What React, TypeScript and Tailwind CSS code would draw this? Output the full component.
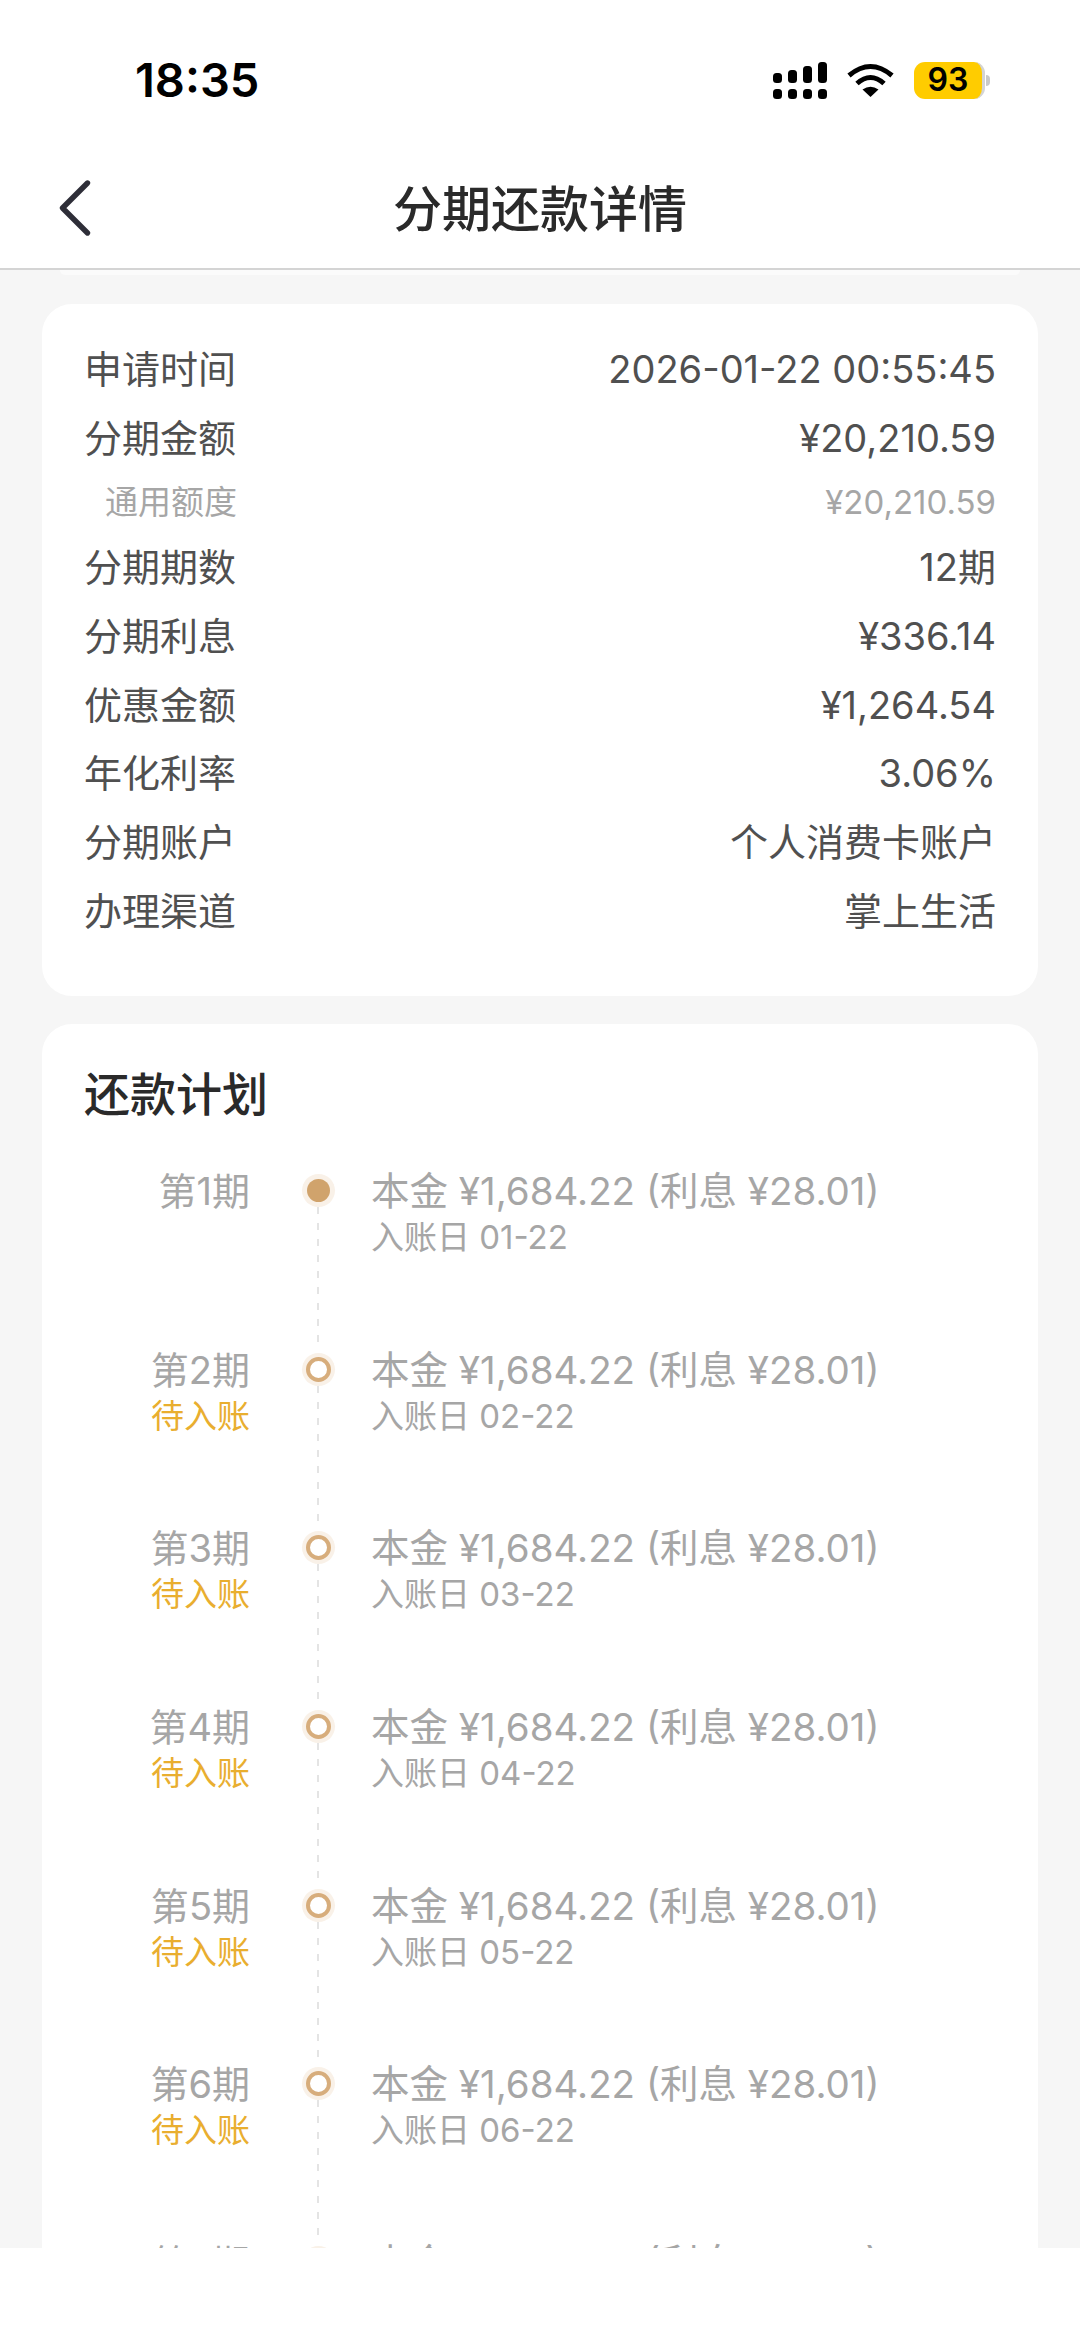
import React from "react";
import { ChevronLeft } from "lucide-react";

const FONT = "font-['Inter','Noto_Sans_CJK_SC',sans-serif]";

const details = [
  { label: "申请时间", value: "2026-01-22 00:55:45" },
  { label: "分期金额", value: "¥20,210.59" },
  { label: "通用额度", value: "¥20,210.59", sub: true },
  { label: "分期期数", value: "12期" },
  { label: "分期利息", value: "¥336.14" },
  { label: "优惠金额", value: "¥1,264.54" },
  { label: "年化利率", value: "3.06%" },
  { label: "分期账户", value: "个人消费卡账户" },
  { label: "办理渠道", value: "掌上生活" },
];

const plan = ["01-22", "02-22", "03-22", "04-22", "05-22", "06-22", "07-22"];

const SignalIcon = () => (
  <svg width="54" height="37" viewBox="0 0 54 37" fill="#000">
    <rect x="0" y="11" width="9" height="10" rx="3.5" />
    <rect x="15" y="8" width="9" height="13" rx="3.5" />
    <rect x="30" y="4" width="9" height="17" rx="3.5" />
    <rect x="45" y="0" width="9" height="21" rx="3.5" />
    <rect x="0" y="27" width="9" height="10" rx="3.5" />
    <rect x="15" y="27" width="9" height="10" rx="3.5" />
    <rect x="30" y="27" width="9" height="10" rx="3.5" />
    <rect x="45" y="27" width="9" height="10" rx="3.5" />
  </svg>
);

const WifiIcon = () => (
  <svg width="47" height="34" viewBox="0 0 47 34" fill="none" stroke="#000" strokeWidth="5">
    <path d="M2 12.5Q23.5 -5.5 45 12.5" />
    <path d="M10 20.5Q23.5 8.5 37 20.5" />
    <path d="M15.5 26.5Q23.5 21 31.5 26.5L23.5 34Z" fill="#000" stroke="none" />
  </svg>
);

const Battery = () => (
  <div className="flex items-center gap-[1px]">
    <div className="w-[71px] h-[37px] rounded-[11px] bg-[#ffcc00] flex items-center justify-center border-r-[3px] border-[#d4d4d4]">
      <span className="text-[32px] leading-none font-semibold text-black">93</span>
    </div>
    <div className="w-[4px] h-[11px] rounded-r-full bg-[#c9c9c9]" />
  </div>
);

const DetailRow = ({ label, value, sub }: { label: string; value: string; sub?: boolean }) => (
  <div className={`flex items-center justify-between ${sub ? "h-[61px] text-[33px] text-[#a6a6a6] pl-[21px]" : "h-[68.7px] text-[38px] text-[#505050]"}`}>
    <span>{label}</span>
    <span>{value}</span>
  </div>
);

const PlanRow = ({ index, date }: { index: number; date: string }) => (
  <div className="flex h-[178.7px]">
    <div className="w-[166px] flex flex-col items-end pt-[2px]">
      <span className="text-[38px] leading-[48px] text-[#a6a6a6]">第{index + 1}期</span>
      {index > 0 && <span className="text-[33px] leading-[44px] text-[#e9ae2f]">待入账</span>}
    </div>
    <div className="w-[34px] ml-[51px] flex flex-col items-center">
      <div className="mt-[9px] w-[33px] h-[33px] rounded-full bg-[#f9f1e8] flex items-center justify-center shrink-0">
        {index === 0 ? (
          <div className="w-[23px] h-[23px] rounded-full bg-[#d0a36c]" />
        ) : (
          <div className="w-[25px] h-[25px] rounded-full bg-white border-[4px] border-[#d7ad7c]" />
        )}
      </div>
      <div className="w-[2px] flex-1 bg-[repeating-linear-gradient(to_bottom,#e4e4e4_0px,#e4e4e4_7px,transparent_7px,transparent_16px)]" />
    </div>
    <div className="ml-[36px] flex flex-col pt-[2px] text-[#a6a6a6]">
      <span className="text-[38.5px] leading-[48px] whitespace-nowrap">本金 ¥1,684.22 (利息 ¥28.01)</span>
      <span className="text-[33px] leading-[44px] whitespace-nowrap">入账日 {date}</span>
    </div>
  </div>
);

export default function App() {
  return (
    <div className={`${FONT} w-[1080px] h-[2341px] flex flex-col bg-white overflow-hidden`}>
      <header className="h-[270px] shrink-0 bg-white border-b-2 border-[#d4d4d4] flex flex-col">
        <div className="h-[160px] flex items-center justify-between pl-[135px] pr-[90px]">
          <span className="text-[47px] font-semibold text-black font-['Inter',sans-serif]">18:35</span>
          <div className="flex items-center gap-[20px]">
            <SignalIcon />
            <WifiIcon />
            <Battery />
          </div>
        </div>
        <div className="relative flex-1 flex items-center justify-center pb-[8px]">
          <ChevronLeft className="absolute left-[25px] top-[-2px] text-[#2e2e38]" size={100} strokeWidth={1.3} />
          <h1 className="text-[49px] font-medium text-[#2a2a2a]">分期还款详情</h1>
        </div>
      </header>

      <main className="flex-1 min-h-0 overflow-hidden bg-[#f6f6f6] px-[42px]">
        <div className="h-[5px] mx-[18px] bg-[#fbfbfb] rounded-b-[6px]" />
        <section className="mt-[29px] h-[692px] rounded-[30px] bg-white px-[42px] pt-[31px]">
          {details.map((d) => (
            <DetailRow key={d.label} label={d.label} value={d.value} sub={d.sub} />
          ))}
        </section>
        <section className="mt-[28px] rounded-[30px] bg-white px-[42px] pt-[42px]">
          <h2 className="text-[46px] leading-[56px] font-medium text-[#2a2a2a] mb-[43px]">还款计划</h2>
          {plan.map((date, i) => (
            <PlanRow key={date} index={i} date={date} />
          ))}
        </section>
      </main>
      <div className="h-[93px] shrink-0 bg-white" />
    </div>
  );
}
